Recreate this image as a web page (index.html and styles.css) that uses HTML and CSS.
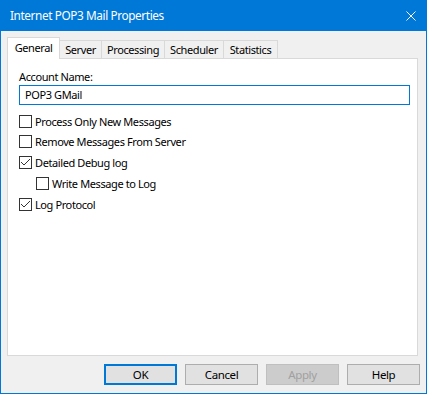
FILE: index.html
```html
<!DOCTYPE html>
<html lang="en">
<head>
  <meta charset="UTF-8">
  <title>Internet POP3 Mail Properties</title>
  <link rel="stylesheet" href="styles.css">
</head>
<body>

<div class="ventana">
  <div class="titulo">
    <span class="titulo-texto">Internet POP3 Mail Properties</span>
    <span class="cerrar">
      <svg width="10" height="10" viewBox="0 0 10 10">
        <path d="M0.5 0.5 L9.5 9.5 M9.5 0.5 L0.5 9.5" stroke="#fff" stroke-width="1" fill="none"/>
      </svg>
    </span>
  </div>

  <div class="cuerpo">
    <!-- Pestañas -->
    <div class="pestanas">
      <div class="pestana activa w-general">General</div>
      <div class="pestana w-server">Server</div>
      <div class="pestana w-processing">Processing</div>
      <div class="pestana w-scheduler">Scheduler</div>
      <div class="pestana w-statistics">Statistics</div>
    </div>

    <div class="panel">
      <div class="etiqueta">Account Name:</div>
      <div class="campo">POP3 GMail</div>

      <div class="opcion">
        <span class="caja"></span>
        <span>Process Only New Messages</span>
      </div>
      <div class="opcion">
        <span class="caja"></span>
        <span>Remove Messages From Server</span>
      </div>
      <div class="opcion">
        <span class="caja marcada">
          <svg width="11" height="11" viewBox="0 0 11 11"><path d="M1 5 L4 8 L10 2" stroke="#333" stroke-width="1" fill="none"/></svg>
        </span>
        <span>Detailed Debug log</span>
      </div>
      <div class="opcion sangria">
        <span class="caja"></span>
        <span>Write Message to Log</span>
      </div>
      <div class="opcion">
        <span class="caja marcada">
          <svg width="11" height="11" viewBox="0 0 11 11"><path d="M1 5 L4 8 L10 2" stroke="#333" stroke-width="1" fill="none"/></svg>
        </span>
        <span>Log Protocol</span>
      </div>
    </div>

    <!-- Botones -->
    <div class="botones">
      <button class="boton defecto">OK</button>
      <button class="boton">Cancel</button>
      <button class="boton" disabled>Apply</button>
      <button class="boton">Help</button>
    </div>
  </div>
</div>

</body>
</html>
```

FILE: styles.css
```css
/* Dialogo estilo Windows 10 */
body {
  margin: 0;
  font-family: "Noto Sans", "Open Sans", sans-serif;
  font-size: 11px;
  letter-spacing: -0.4px;
  color: #000;
}
.ventana {
  width: 427px;
  height: 394px;
  box-sizing: border-box;
  border: 1px solid #0078d7;
  border-top: none;
  background: #f0f0f0;
  display: flex;
  flex-direction: column;
}
.titulo {
  height: 31px;
  margin: 0 -1px;
  background: #0078d7;
  color: #fff;
  display: flex;
  align-items: center;
  justify-content: space-between;
  padding: 0 11px 0 10px;
}
.titulo-texto {
  font-size: 11.8px;
  margin-top: -1px;
}
.cerrar {
  display: flex;
}
.cerrar svg {
  display: block;
}
.cuerpo {
  flex: 1;
  padding: 6px 8px 0 6px;
}
.pestanas {
  display: flex;
  align-items: flex-end;
  height: 21px;
  position: relative;
  z-index: 1;
}
.pestana {
  height: 18px;
  box-sizing: border-box;
  border: 1px solid #d9d9d9;
  border-bottom: none;
  margin-left: -1px;
  text-align: center;
  line-height: 17px;
  background: #f0f0f0;
}
.pestana:first-child {
  margin-left: 0;
}
.pestana.activa {
  height: 22px;
  margin-bottom: -1px;
  background: #fff;
  line-height: 19px;
}
.w-general { width: 53px; }
.w-server { width: 43px; }
.w-processing { width: 64px; }
.w-scheduler { width: 60px; }
.w-statistics { width: 55px; }

.panel {
  height: 298px;
  box-sizing: border-box;
  border: 1px solid #d9d9d9;
  background: #fff;
  padding: 9px 7px 0 11px;
}
.etiqueta {
  height: 18px;
  line-height: 17px;
}
.campo {
  width: 391px;
  height: 20px;
  box-sizing: border-box;
  border: 1px solid #0078d7;
  margin-top: -1px;
  padding-left: 5px;
  line-height: 18px;
}
.opcion {
  display: flex;
  align-items: center;
  gap: 3px;
  height: 13px;
  margin-top: 8px;
}
.campo + .opcion {
  margin-top: 10px;
}
.campo + .opcion + .opcion {
  margin-top: 7px;
}
.sangria {
  padding-left: 17px;
}
.caja {
  width: 13px;
  height: 13px;
  box-sizing: border-box;
  border: 1px solid #333;
  background: #fff;
  flex-shrink: 0;
  display: flex;
  align-items: center;
  justify-content: center;
}
.caja svg {
  display: block;
}
.botones {
  display: flex;
  justify-content: flex-end;
  gap: 8px;
  margin-top: 8px;
  margin-right: -2px;
}
.boton {
  width: 73px;
  height: 21px;
  box-sizing: border-box;
  border: 1px solid #adadad;
  background: #e1e1e1;
  font-family: inherit;
  font-size: 11.5px;
  letter-spacing: -0.4px;
  color: #000;
  padding: 0;
}
.boton.defecto {
  border: 2px solid #0078d7;
}
.boton:disabled {
  background: #cccccc;
  border-color: #bfbfbf;
  color: #a0a0a0;
}
```
